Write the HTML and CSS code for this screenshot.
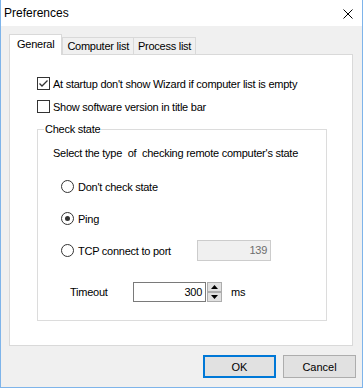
FILE: index.html
```html
<!DOCTYPE html>
<html lang="en">
  <head>
    <meta charset="UTF-8" />
    <meta name="viewport" content="width=device-width, initial-scale=1.0" />
    <title>Preferences</title>
    <link rel="stylesheet" href="styles.css">
  </head>
  <body>
    <div class="window">
      <div class="titlebar">
        <span class="title">Preferences</span>
        <svg class="close" width="10" height="10" viewBox="0 0 10 10">
          <path d="M0.5 0.5L9.5 9.5M9.5 0.5L0.5 9.5" stroke="#000" stroke-width="1" fill="none" />
        </svg>
      </div>

      <div class="content">
        <div class="tabs">
          <div class="tab active">General</div>
          <div class="tab">Computer list</div>
          <div class="tab">Process list</div>
        </div>

        <div class="panel">
          <label class="check">
            <span class="box">
              <svg width="11" height="11" viewBox="0 0 11 11">
                <path d="M1.5 5.5L4 8L9.5 2.5" stroke="#333" stroke-width="1.3" fill="none" />
              </svg>
            </span>
            At startup don't show Wizard if computer list is empty
          </label>
          <label class="check">
            <span class="box"></span>
            Show software version in title bar
          </label>

          <fieldset class="group">
            <legend>Check state</legend>
            <div class="group-body">
              <p class="hint">Select the type&nbsp; of&nbsp; checking remote computer's state</p>

              <div class="radio"><span class="dot"></span>Don't check state</div>
              <div class="radio"><span class="dot on"></span>Ping</div>
              <div class="radio tcp">
                <span class="dot"></span>
                <span class="radio-text">TCP connect to port</span>
                <span class="field disabled">139</span>
              </div>

              <div class="timeout">
                <span class="timeout-label">Timeout</span>
                <span class="field value">300</span>
                <span class="spin">
                  <span class="spin-btn">
                    <svg width="7" height="4" viewBox="0 0 7 4"><path d="M0 4L3.5 0L7 4Z" fill="#000" /></svg>
                  </span>
                  <span class="spin-btn">
                    <svg width="7" height="4" viewBox="0 0 7 4"><path d="M0 0L3.5 4L7 0Z" fill="#000" /></svg>
                  </span>
                </span>
                <span class="unit">ms</span>
              </div>
            </div>
          </fieldset>
        </div>

        <div class="buttons">
          <button class="btn default">OK</button>
          <button class="btn">Cancel</button>
        </div>
      </div>
    </div>
  </body>
</html>
```

FILE: styles.css
```css
body {
  margin: 0;
  background: #fff;
}
.window {
  width: 363px;
  height: 388px;
  box-sizing: border-box;
  border: 1px solid #7eb4ea;
  border-top: none;
  background: #f0f0f0;
  font-family: "Liberation Sans", Arial, sans-serif;
  font-size: 11px;
  color: #000;
}
.titlebar {
  height: 26px;
  background: #fff;
  display: flex;
  align-items: center;
  justify-content: space-between;
  padding: 0 9px 0 3px;
}
.title {
  font-size: 12px;
}
.close {
  margin-top: 2px;
}
.content {
  padding: 8px 9px 0 8px;
  letter-spacing: -0.25px;
}
.tabs {
  display: flex;
  align-items: flex-end;
  height: 20px;
}
.tab {
  height: 17px;
  box-sizing: border-box;
  border: 1px solid #d9d9d9;
  border-bottom: none;
  background: #f0f0f0;
  padding: 0 4px;
  line-height: 16px;
  margin-left: -1px;
}
.tab.active {
  height: 21px;
  margin-left: 0;
  margin-bottom: -1px;
  padding: 2px 7px 0 7px;
  line-height: 14px;
  background: #fff;
  position: relative;
  z-index: 1;
}
.tab.active + .tab {
  margin-left: 0;
}
.panel {
  height: 292px;
  box-sizing: border-box;
  border: 1px solid #d9d9d9;
  background: #fff;
  padding: 22px 0 0 27px;
}
.check {
  display: flex;
  align-items: center;
  height: 13px;
}
.check + .check {
  margin-top: 10px;
}
.box {
  width: 13px;
  height: 13px;
  box-sizing: border-box;
  border: 1px solid #333;
  margin-right: 3px;
  background: #fff;
}
.box svg {
  display: block;
}
.group {
  width: 290px;
  box-sizing: border-box;
  margin: 10px 0 0 0;
  padding: 0 0 18px 0;
  border: 1px solid #dcdcdc;
}
.group legend {
  margin-left: 6px;
  padding: 0 1px;
  line-height: 13px;
}
.group-body {
  padding-left: 15px;
}
.hint {
  margin: 11px 0 0 0;
  line-height: 13px;
}
.radio {
  display: flex;
  align-items: center;
  height: 21px;
  margin-left: 8px;
  margin-top: 11px;
}
.hint + .radio {
  margin-top: 16px;
}
.dot {
  width: 13px;
  height: 13px;
  box-sizing: border-box;
  border: 1px solid #333;
  border-radius: 50%;
  margin-right: 4px;
  display: flex;
  align-items: center;
  justify-content: center;
}
.dot.on::after {
  content: "";
  width: 5px;
  height: 5px;
  border-radius: 50%;
  background: #333;
}
.radio-text {
  width: 119px;
}
.field {
  height: 21px;
  box-sizing: border-box;
  border: 1px solid #7a7a7a;
  background: #fff;
  text-align: right;
  padding-right: 3px;
  line-height: 19px;
}
.field.disabled {
  width: 74px;
  border-color: #cccccc;
  background: #f0f0f0;
  color: #6d6d6d;
}
.timeout {
  display: flex;
  align-items: center;
  height: 21px;
  margin-top: 20px;
  margin-left: 17px;
}
.timeout-label {
  width: 63px;
}
.field.value {
  width: 73px;
  height: 20px;
  line-height: 18px;
}
.spin {
  display: flex;
  flex-direction: column;
  margin-left: 1px;
}
.spin-btn {
  width: 15px;
  height: 10px;
  box-sizing: border-box;
  border: 1px solid #adadad;
  background: #e1e1e1;
  display: flex;
  align-items: center;
  justify-content: center;
}
.unit {
  margin-left: 9px;
}
.buttons {
  display: flex;
  justify-content: flex-end;
  gap: 7px;
  margin: 9px -3px 0 0;
}
.btn {
  width: 73px;
  height: 23px;
  box-sizing: border-box;
  border: 1px solid #adadad;
  background: #e1e1e1;
  font-family: "Liberation Sans", Arial, sans-serif;
  font-size: 11px;
  color: #000;
  padding: 0;
}
.btn.default {
  border: 2px solid #0078d7;
}
```
